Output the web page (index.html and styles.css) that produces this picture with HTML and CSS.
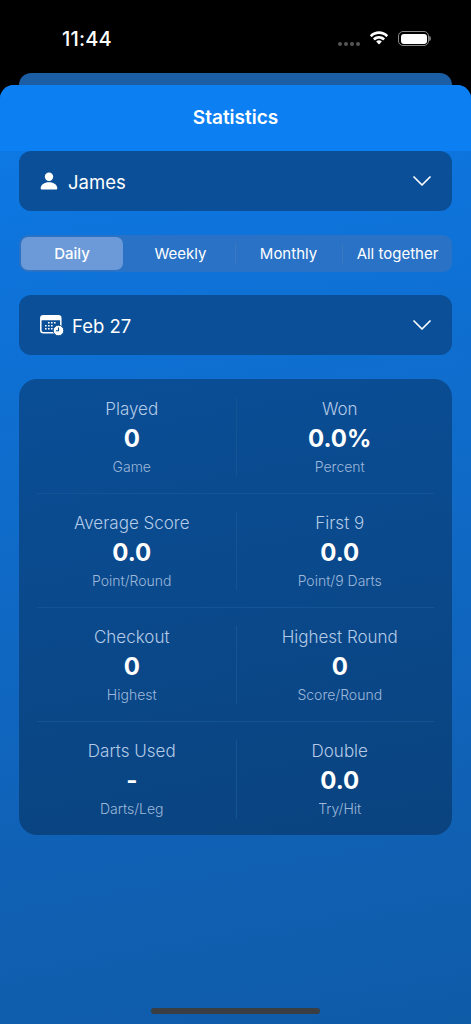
FILE: index.html
```html
<!DOCTYPE html>
<html lang="en">
<head>
<meta charset="utf-8">
<title>Statistics</title>
<link rel="stylesheet" href="styles.css">
</head>
<body>
<div class="phone">
  <div class="status">
    <span class="time">11:44</span>
    <div class="status-icons">
      <span class="dots"><i></i><i></i><i></i><i></i></span>
      <svg class="wifi" width="20" height="15" viewBox="0 0 20 15"><path fill="#fff" d="M10 3.1c2.7 0 5.2 1 7.1 2.8.2.1.4.1.5 0l1.3-1.4c.2-.2.2-.4 0-.6C16.500 1.600 13.300.300 10 .300S3.500 1.600 1.100 3.900c-.2.2-.2.4 0 .6l1.300 1.400c.2.100.4.100.5 0C4.800 4.100 7.300 3.100 10 3.100zM10 7.700c1.500 0 2.900.6 4 1.500.2.200.4.100.5 0l1.300-1.400c.2-.2.2-.4 0-.6-1.600-1.400-3.600-2.200-5.800-2.200s-4.200.8-5.800 2.200c-.2.200-.2.400 0 .6l1.300 1.400c.1.100.3.200.5 0 1.100-.9 2.500-1.500 4-1.500zM12.600 10.800c.1-.1.100-.3 0-.5-1.500-1.300-3.700-1.300-5.200 0-.1.200-.1.400 0 .5l2.300 2.400c.2.200.4.200.6 0z"/></svg>
      <span class="battery"><span class="battery-fill"></span></span>
    </div>
  </div>
  <div class="peek"></div>
  <main class="sheet">
    <header class="sheet-head"><h1>Statistics</h1></header>
    <div class="sheet-body">
      <div class="select">
        <svg class="user-icon" width="18" height="18" viewBox="0 0 18 18"><circle fill="#fff" cx="9" cy="4.700" r="4.200"/><path fill="#fff" d="M.7 16.200c0-3.400 3.600-6 8.300-6s8.300 2.600 8.300 6c0 .8-.5 1.300-1.300 1.300H2c-.8 0-1.300-.5-1.300-1.300z"/></svg>
        <span class="select-text">James</span>
        <svg class="chevron" width="18" height="10" viewBox="0 0 18 10"><path fill="none" stroke="#fff" stroke-width="1.700" stroke-linecap="round" stroke-linejoin="round" d="M1 1l8 8 8-8"/></svg>
      </div>

      <div class="segments">
        <span class="seg seg-active">Daily</span>
        <span class="seg seg-pad">Weekly</span>
        <span class="seg seg-line">Monthly</span>
        <span class="seg seg-line seg-pad">All together</span>
      </div>

      <div class="select">
        <svg class="cal-icon" width="24" height="21" viewBox="0 0 24 21">
          <rect x=".8" y=".8" width="20" height="17" rx="2.500" fill="none" stroke="#fff" stroke-width="1.500"/>
          <path fill="#fff" d="M3 .8h16c1.200 0 2 .8 2 2v2.400H1V2.800c0-1.200.8-2 2-2z"/>
          <g fill="#fff"><rect x="8" y="7" width="1.600" height="1.500"/><rect x="11" y="7" width="1.600" height="1.500"/><rect x="14" y="7" width="1.600" height="1.500"/><rect x="5" y="10" width="1.600" height="1.500"/><rect x="8" y="10" width="1.600" height="1.500"/><rect x="11" y="10" width="1.600" height="1.500"/><rect x="5" y="13" width="1.600" height="1.500"/><rect x="8" y="13" width="1.600" height="1.500"/><rect x="11" y="13" width="1.600" height="1.500"/></g>
          <circle cx="18.500" cy="15.500" r="5.300" fill="#fff" stroke="#0a4c90" stroke-width="1"/>
          <path fill="none" stroke="#0a4c90" stroke-width="1.100" d="M18.500 12.500v3.300h-2.600"/>
        </svg>
        <span class="select-text">Feb 27</span>
        <svg class="chevron" width="18" height="10" viewBox="0 0 18 10"><path fill="none" stroke="#fff" stroke-width="1.700" stroke-linecap="round" stroke-linejoin="round" d="M1 1l8 8 8-8"/></svg>
      </div>

      <section class="stats">
        <div class="row">
          <div class="stat"><span class="label">Played</span><strong class="value">0</strong><span class="unit">Game</span></div>
          <div class="stat"><span class="label">Won</span><strong class="value">0.0%</strong><span class="unit">Percent</span></div>
        </div>
        <div class="row">
          <div class="stat"><span class="label">Average Score</span><strong class="value">0.0</strong><span class="unit">Point/Round</span></div>
          <div class="stat"><span class="label">First 9</span><strong class="value">0.0</strong><span class="unit">Point/9 Darts</span></div>
        </div>
        <div class="row">
          <div class="stat"><span class="label">Checkout</span><strong class="value">0</strong><span class="unit">Highest</span></div>
          <div class="stat"><span class="label">Highest Round</span><strong class="value">0</strong><span class="unit">Score/Round</span></div>
        </div>
        <div class="row">
          <div class="stat"><span class="label">Darts Used</span><strong class="value">-</strong><span class="unit">Darts/Leg</span></div>
          <div class="stat"><span class="label">Double</span><strong class="value">0.0</strong><span class="unit">Try/Hit</span></div>
        </div>
      </section>
    </div>
    <div class="home-bar"></div>
  </main>
</div>
</body>
</html>
```

FILE: styles.css
```css
* { box-sizing: border-box; }
html, body { margin: 0; padding: 0; background: #000; }
body { font-family: Inter, "Noto Sans", sans-serif; color: #fff; }
.phone { width: 471px; height: 1024px; overflow: hidden; display: flex; flex-direction: column; background: #000; }

.status { height: 73px; flex: none; display: flex; justify-content: space-between; padding: 28px 42px 0 62px; }
.time { font-size: 20px; line-height: 23px; font-weight: 500; letter-spacing: .2px; }
.status-icons { display: flex; align-items: flex-start; }
.dots { display: flex; gap: 2px; margin: 14px 9px 0 0; }
.dots i { width: 4px; height: 4px; border-radius: 50%; background: #555; }
.wifi { margin: 3px 9px 0 0; }
.battery { position: relative; width: 31px; height: 15px; margin-top: 3px; border: 1px solid #8a8a8a; border-radius: 5px; padding: 1.500px; }
.battery::after { content: ""; position: absolute; right: -3px; top: 4px; width: 2px; height: 5px; border-radius: 0 2px 2px 0; background: #777; }
.battery-fill { display: block; height: 100%; border-radius: 3px; background: #fff; }

.peek { height: 12px; flex: none; margin: 0 19px; background: #1b5ea3; border-radius: 12px 12px 0 0; }
.sheet { flex: 1; display: flex; flex-direction: column; border-radius: 14px 14px 0 0; overflow: hidden; background: linear-gradient(170deg, #0d7ae8 0%, #0f6ccb 40%, #1060b3 80%, #0e5ba8 100%); }
.sheet-head { height: 66px; flex: none; display: flex; align-items: center; justify-content: center; padding-bottom: 1px; background: #0c7ff3; }
.sheet-head h1 { margin: 0; font-size: 19px; line-height: 24px; font-weight: 600; }
.sheet-body { flex: 1; padding: 0 19px; display: flex; flex-direction: column; }

.select { height: 60px; flex: none; display: flex; align-items: center; padding: 1px 21px 0; border-radius: 12px; background: #0a4f97; }
.user-icon { margin-right: 10px; margin-top: -1px; }
.cal-icon { margin-right: 8px; margin-top: -1px; }
.select-text { font-size: 18.500px; line-height: 24px; font-weight: 400; }
.chevron { margin-left: auto; margin-top: -1px; }

.segments { height: 37px; flex: none; margin: 24px 0 23px; padding: 2px; display: grid; grid-template-columns: 102px 1fr 107px 108px; border-radius: 9px; background: #2a72c5; }
.seg { display: flex; align-items: center; justify-content: center; position: relative; font-size: 15px; font-weight: 400; }
.seg-pad { padding-left: 3px; }
.seg-active { border-radius: 7px; background: #6c9ad8; font-weight: 500; }
.seg-line::before { content: ""; position: absolute; left: 0; top: 6px; height: 21px; width: 1px; background: #3a78c0; }

.stats { margin-top: 24px; height: 456px; flex: none; border-radius: 18px; padding: 1px 18px 0; background: linear-gradient(170deg, #0a4e96 0%, #0a437f 100%); display: flex; flex-direction: column; }
.row { height: 114px; flex: none; display: grid; grid-template-columns: 1fr 1fr; padding: 18px 0 17px; border-bottom: 1px solid #145495; }
.row:last-child { border-bottom: 0; }
.stat { display: flex; flex-direction: column; align-items: center; margin-left: -9px; }
.stat + .stat { margin-left: 0; margin-right: -9px; border-left: 1px solid #145495; }
.label { font-size: 17px; line-height: 20px; padding-top: 1px; font-weight: 300; color: #b4cae6; }
.value { font-size: 24px; line-height: 30px; margin-top: 5px; font-weight: 700; }
.unit { font-size: 14px; line-height: 18px; margin-top: 4px; font-weight: 300; color: #9db8da; }

.home-bar { width: 169px; height: 6px; flex: none; margin: 0 auto 10px; border-radius: 3px; background: #3a3d42; }
```
